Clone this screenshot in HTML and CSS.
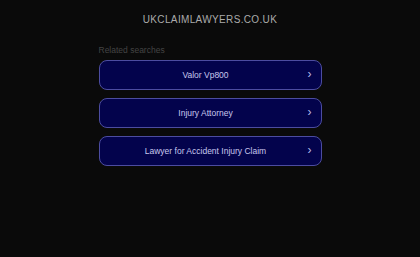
FILE: index.html
```html
<!DOCTYPE html>
<html>
<head>
<meta charset="utf-8">
<link rel="stylesheet" href="styles.css">
</head>
<body>
<div class="page">
  <div class="domain">UKCLAIMLAWYERS.CO.UK</div>
  <div class="content">
    <div class="label">Related searches</div>
    <div class="list">
      <a class="item" href="#"><span class="text">Valor Vp800</span><span class="chev">&#8250;</span></a>
      <a class="item" href="#"><span class="text">Injury Attorney</span><span class="chev">&#8250;</span></a>
      <a class="item" href="#"><span class="text">Lawyer for Accident Injury Claim</span><span class="chev">&#8250;</span></a>
    </div>
  </div>
</div>
</body>
</html>
```
FILE: styles.css
```css
html, body {
  margin: 0;
  padding: 0;
  background: #0a0a0a;
  height: 100%;
}
body {
  font-family: "Liberation Sans", Arial, sans-serif;
}
.page {
  display: flex;
  flex-direction: column;
  align-items: center;
}
.domain {
  margin-top: 13px;
  color: #ababab;
  font-size: 10px;
  letter-spacing: 0.35px;
  line-height: 13px;
}
.content {
  width: 223px;
  margin-top: 19px;
}
.label {
  color: #444;
  font-size: 8.5px;
  line-height: 10px;
  margin-bottom: 5px;
}
.list {
  display: flex;
  flex-direction: column;
  gap: 8px;
}
.item {
  display: flex;
  align-items: center;
  height: 28px;
  padding: 0 9px 0 12px;
  border: 1px solid #4c4ca0;
  border-radius: 8px;
  background: #03034c;
  color: #c8c8ee;
  text-decoration: none;
  font-size: 8.5px;
}
.text {
  flex: 1;
  text-align: center;
}
.chev {
  width: 12px;
  text-align: right;
  font-size: 12px;
  line-height: 12px;
  margin-top: -2px;
  color: #b8b8e8;
}
```
